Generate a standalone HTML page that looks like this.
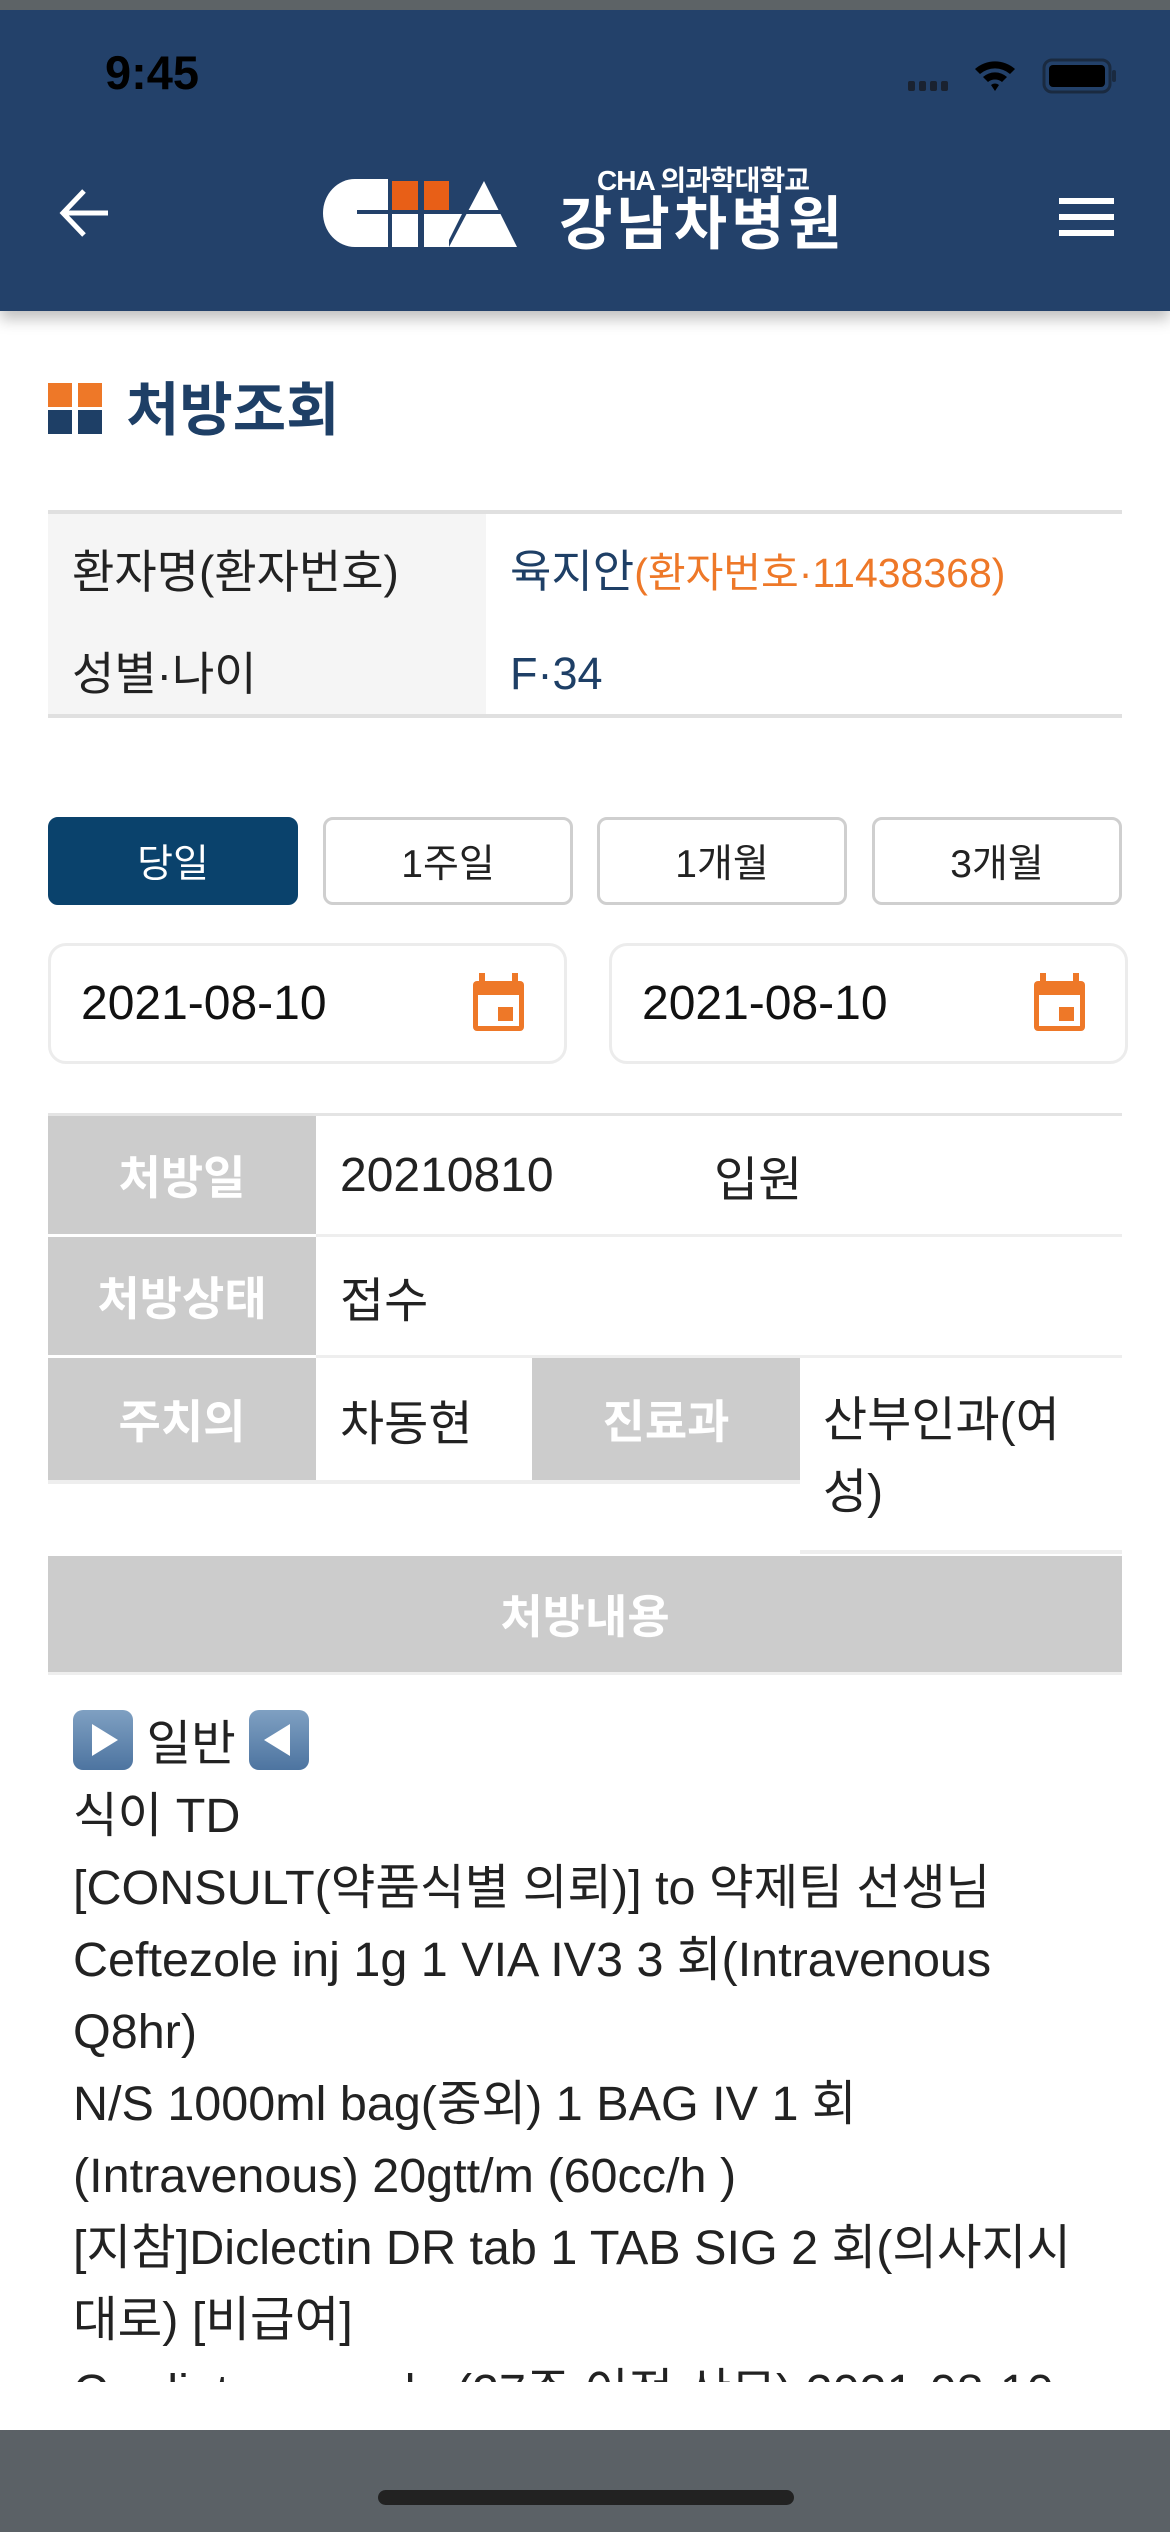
<!DOCTYPE html>
<html><head><meta charset="utf-8">
<style>
*{margin:0;padding:0;box-sizing:border-box}
body{width:1170px;height:2532px;position:relative;background:#fff;font-family:"Liberation Sans","Noto Sans CJK KR",sans-serif;overflow:hidden;color:#222}
.a{position:absolute}
.hdr{left:0;top:0;width:1170px;height:311px;background:#23416a;box-shadow:0 8px 14px rgba(0,0,0,.25)}
.topg{left:0;top:0;width:1170px;height:10px;background:#5d6366}
.lbl{background:#cccccc;color:#fff;font-weight:bold;font-size:46px;display:flex;align-items:center;justify-content:center}
.val{font-size:48px;color:#222;display:flex;align-items:center;padding-left:24px}
.btn{top:817px;width:250px;height:88px;border:3px solid #cfcfcf;border-radius:10px;font-size:39px;display:flex;align-items:center;justify-content:center;color:#222;background:#fff}
.date{top:943px;height:121px;border:3px solid #ececec;border-radius:18px;font-size:48px;display:flex;align-items:center;padding-left:30px;color:#111}
.cont{left:73px;top:1708px;width:1060px;height:674px;overflow:hidden;font-size:48.5px;line-height:72px;color:#222;white-space:nowrap}
.tri{display:inline-block;width:60px;height:60px;border-radius:10px;background:linear-gradient(#7fa0c2,#4d74a0);vertical-align:-10px;position:relative}
</style></head><body>
<div class="a hdr"></div>
<div class="a topg"></div>
<div class="a" style="left:105px;top:45px;font-size:47px;font-weight:bold;color:#000">9:45</div>
<svg class="a" style="left:900px;top:55px" width="220" height="40" viewBox="0 0 220 40">
<g fill="#1a2230"><rect x="8" y="26" width="7" height="10" rx="2"/><rect x="19" y="26" width="7" height="10" rx="2"/><rect x="30" y="26" width="7" height="10" rx="2"/><rect x="41" y="26" width="7" height="10" rx="2"/></g>
<path d="M75 14 A30 30 0 0 1 115 14 L110 19 A23 23 0 0 0 80 19Z M83 22 A18 18 0 0 1 107 22 L102 27 A11 11 0 0 0 88 27Z M91 30 A6 6 0 0 1 99 30 L95 36Z" fill="#000"/>
<rect x="144" y="5" width="66" height="32" rx="8" fill="none" stroke="#1a2a40" stroke-width="3"/>
<rect x="149" y="10" width="56" height="22" rx="4" fill="#000"/>
<rect x="212" y="15" width="4" height="12" rx="2" fill="#1a2a40"/>
</svg>
<svg class="a" style="left:58px;top:187px" width="54" height="52" viewBox="0 0 54 52"><path d="M50 26 H6 M26 4 L5 26 L26 48" stroke="#fff" stroke-width="5" fill="none"/></svg>
<div class="a" style="left:1059px;top:198px;width:55px;height:6px;background:#fff"></div>
<div class="a" style="left:1059px;top:214px;width:55px;height:6px;background:#fff"></div>
<div class="a" style="left:1059px;top:230px;width:55px;height:6px;background:#fff"></div>
<svg class="a" style="left:320px;top:175px" width="200" height="75" viewBox="320 175 200 75">
<ellipse cx="355" cy="213" rx="32" ry="34" fill="#fff"/>
<rect x="355" y="179" width="33" height="68" fill="#fff"/>
<rect x="392" y="181" width="26" height="29" fill="#e85f17"/>
<rect x="424" y="181" width="25" height="29" fill="#e85f17"/>
<rect x="392" y="214" width="26" height="33" fill="#fff"/>
<rect x="424" y="214" width="25" height="33" fill="#fff"/>
<polygon points="484,181 517,247 449,247" fill="#fff"/>
<rect x="357" y="210" width="160" height="4" fill="#23416a"/>
<polygon points="449,214 462,214 449,240" fill="#fff"/>
</svg>
<div class="a" style="left:597px;top:161px;font-size:28px;line-height:40px;font-weight:bold;color:#fff;letter-spacing:-1px">CHA 의과학대학교</div>
<div class="a" style="left:559px;top:195px;font-size:58px;font-weight:bold;color:#fff;letter-spacing:4px;line-height:60px">강남차병원</div>
<div class="a" style="left:48px;top:383px;width:24px;height:24px;background:#ee7828"></div>
<div class="a" style="left:78px;top:383px;width:24px;height:24px;background:#ee7828"></div>
<div class="a" style="left:48px;top:410px;width:24px;height:24px;background:#1e3f66"></div>
<div class="a" style="left:78px;top:410px;width:24px;height:24px;background:#1e3f66"></div>
<div class="a" style="left:126px;top:376px;font-size:58px;font-weight:bold;color:#1e3f66;line-height:70px">처방조회</div>
<div class="a" style="left:48px;top:510px;width:1074px;height:4px;background:#e0e0e0"></div>
<div class="a" style="left:48px;top:514px;width:438px;height:200px;background:#f5f5f5"></div>
<div class="a" style="left:48px;top:714px;width:1074px;height:4px;background:#e0e0e0"></div>
<div class="a" style="left:72px;top:544px;font-size:46px;line-height:56px">환자명(환자번호)</div>
<div class="a" style="left:72px;top:646px;font-size:46px;line-height:56px">성별·나이</div>
<div class="a" style="left:510px;top:544px;font-size:45px;line-height:56px;color:#1e3f66">육지안<span style="color:#ee7828;font-size:41px">(환자번호·11438368)</span></div>
<div class="a" style="left:510px;top:646px;font-size:45px;line-height:56px;color:#1e3f66">F·34</div>
<div class="a btn" style="left:48px;background:#0a426c;border-color:#0a426c;color:#fff">당일</div>
<div class="a btn" style="left:323px">1주일</div>
<div class="a btn" style="left:597px">1개월</div>
<div class="a btn" style="left:872px">3개월</div>
<div class="a date" style="left:48px;width:519px">2021-08-10</div>
<div class="a date" style="left:609px;width:519px">2021-08-10</div>
<svg class="a" style="left:471px;top:973px" width="55" height="60" viewBox="0 0 55 60"><rect x="2" y="8" width="51" height="50" rx="4" fill="#ee7828"/><rect x="8" y="0" width="6" height="10" fill="#ee7828"/><rect x="41" y="0" width="6" height="10" fill="#ee7828"/><rect x="7" y="22" width="41" height="31" fill="#fff"/><rect x="27" y="34" width="15" height="14" fill="#ee7828"/></svg>
<svg class="a" style="left:1032px;top:973px" width="55" height="60" viewBox="0 0 55 60"><rect x="2" y="8" width="51" height="50" rx="4" fill="#ee7828"/><rect x="8" y="0" width="6" height="10" fill="#ee7828"/><rect x="41" y="0" width="6" height="10" fill="#ee7828"/><rect x="7" y="22" width="41" height="31" fill="#fff"/><rect x="27" y="34" width="15" height="14" fill="#ee7828"/></svg>
<div class="a" style="left:48px;top:1113px;width:1074px;height:3px;background:#e4e4e4"></div>
<div class="a lbl" style="left:48px;top:1116px;width:268px;height:118px">처방일</div>
<div class="a val" style="left:316px;top:1116px;height:118px">20210810</div>
<div class="a val" style="left:690px;top:1116px;height:118px">입원</div>
<div class="a" style="left:316px;top:1234px;width:806px;height:3px;background:#eee"></div>
<div class="a lbl" style="left:48px;top:1237px;width:268px;height:118px">처방상태</div>
<div class="a val" style="left:316px;top:1237px;height:118px">접수</div>
<div class="a" style="left:316px;top:1355px;width:806px;height:3px;background:#eee"></div>
<div class="a lbl" style="left:48px;top:1358px;width:268px;height:122px">주치의</div>
<div class="a val" style="left:316px;top:1358px;height:122px">차동현</div>
<div class="a lbl" style="left:532px;top:1358px;width:268px;height:122px">진료과</div>
<div class="a" style="left:823px;top:1385px;width:300px;font-size:48px;line-height:72px;white-space:nowrap">산부인과(여<br>성)</div>
<div class="a" style="left:48px;top:1480px;width:752px;height:4px;background:#eee"></div>
<div class="a" style="left:800px;top:1550px;width:322px;height:4px;background:#eee"></div>
<div class="a lbl" style="left:48px;top:1556px;width:1074px;height:116px">처방내용</div>
<div class="a" style="left:48px;top:1672px;width:1074px;height:3px;background:#eee"></div>
<div class="a cont">
<div><span class="tri"><svg width="60" height="60" viewBox="0 0 60 60"><polygon points="19,14 45,30 19,46" fill="#fff"/></svg></span> 일반 <span class="tri"><svg width="60" height="60" viewBox="0 0 60 60"><polygon points="41,14 15,30 41,46" fill="#fff"/></svg></span></div>
<div>식이 TD</div>
<div>[CONSULT(약품식별 의뢰)] to 약제팀 선생님</div>
<div>Ceftezole inj 1g 1 VIA IV3 3 회(Intravenous</div>
<div>Q8hr)</div>
<div>N/S 1000ml bag(중외) 1 BAG IV 1 회</div>
<div>(Intravenous) 20gtt/m (60cc/h )</div>
<div>[지참]Diclectin DR tab 1 TAB SIG 2 회(의사지시</div>
<div>대로) [비급여]</div>
<div>Cardiotocography(27주 이전 산모) 2021-08-10</div>
</div>
<div class="a" style="left:0;top:2430px;width:1170px;height:102px;background:#5b6166"></div>
<div class="a" style="left:378px;top:2490px;width:416px;height:15px;border-radius:8px;background:#222"></div>
</body></html>
